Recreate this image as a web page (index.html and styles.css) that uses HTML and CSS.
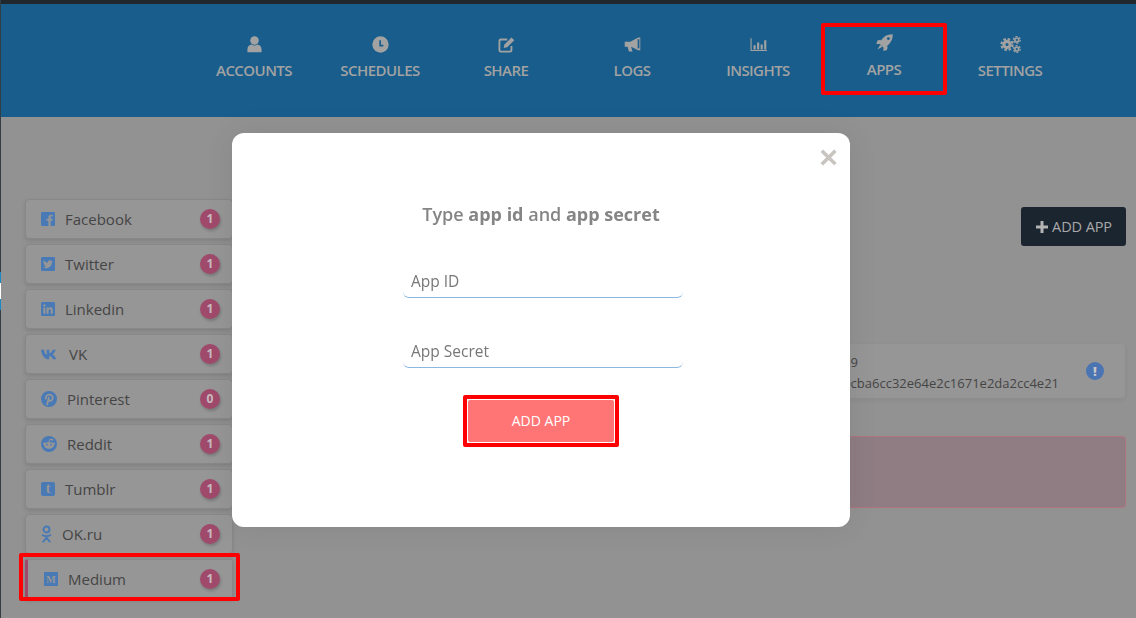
FILE: index.html
```html
<!DOCTYPE html>
<html lang="en">
<head>
  <meta charset="UTF-8" />
  <title>Apps</title>
  <link rel="stylesheet" href="styles.css">
</head>
<body>
  <div class="rail"><div class="rail-mark"><div class="rail-white"></div></div></div>
  <div class="topline"></div>

  <header class="header">
    <nav class="nav">
      <a class="nav-item">
        <svg class="nav-icon" viewBox="0 0 24 24"><circle cx="12" cy="6.500" r="6"/><path d="M2 23v-4c0-4 2.500-7 6-7 1.200.9 2.500 1.400 4 1.400s2.800-.5 4-1.400c3.500 0 6 3 6 7v4z"/></svg>
        <span>ACCOUNTS</span>
      </a>
      <a class="nav-item">
        <svg class="nav-icon" viewBox="0 0 24 24"><circle cx="12" cy="12" r="11.500"/><path class="cut" d="M11.500 6v7.500h4.500"/></svg>
        <span>SCHEDULES</span>
      </a>
      <a class="nav-item">
        <svg class="nav-icon" viewBox="0 0 24 24"><path class="line" d="M13 5H4a2 2 0 0 0-2 2v13a2 2 0 0 0 2 2h13a2 2 0 0 0 2-2v-6"/><path d="M9 12 19 2l4 4-10 10-5 1z"/></svg>
        <span>SHARE</span>
      </a>
      <a class="nav-item">
        <svg class="nav-icon" viewBox="0 0 24 24"><path d="M1 8h8l11-6h3v18h-3L10 15l2 7H7l-2-7H1z"/><path class="cut" d="M20.500 4.500v13"/></svg>
        <span>LOGS</span>
      </a>
      <a class="nav-item">
        <svg class="nav-icon" viewBox="0 0 24 24"><path class="thin" d="M1.500 3v17.500H24"/><path d="M5 13h3v6H5zM10 9h3v10h-3zM15 12h3v7h-3zM20 6h3v13h-3z"/></svg>
        <span>INSIGHTS</span>
      </a>
      <a class="nav-item nav-marked">
        <svg class="nav-icon" viewBox="0 0 24 24"><path d="M23.500.5C24 7 21 13 15 17.500l1.500.5-1 4.500-5 1.500v-5l-5-5h-5L2 9l4.500-1 .5 1.500C11 3 17 0 23.500.5z"/><path d="M6 15l-4 7 7-4z"/><circle class="hole" cx="17.500" cy="6.500" r="2"/></svg>
        <span>APPS</span>
      </a>
      <a class="nav-item">
        <svg class="nav-icon nav-icon-wide" viewBox="0 0 30 24">
          <circle class="gear-teeth" cx="10" cy="12" r="8"/><circle class="gear-ring" cx="10" cy="12" r="4.500"/>
          <circle class="gear-teeth small" cx="24" cy="5.500" r="5"/><circle class="gear-ring small" cx="24" cy="5.500" r="2.800"/>
          <circle class="gear-teeth small" cx="24" cy="18.500" r="5"/><circle class="gear-ring small" cx="24" cy="18.500" r="2.800"/>
        </svg>
        <span>SETTINGS</span>
      </a>
    </nav>
  </header>

  <div class="page">
    <aside class="sidebar">
      <a class="side-item">
        <svg class="side-icon" viewBox="0 0 24 24"><rect width="24" height="24" rx="2"/><path class="knock" d="M16.500 24v-9h3l.5-3.500h-3.500V9.500c0-1 .4-1.700 1.800-1.700H20V4.700c-.4 0-1.500-.2-2.800-.2-2.700 0-4.500 1.600-4.500 4.600v2.400H9.500V15h3.200v9z"/></svg>
        <span class="side-name">Facebook</span><b class="badge">1</b>
      </a>
      <a class="side-item">
        <svg class="side-icon" viewBox="0 0 24 24"><rect width="24" height="24" rx="2"/><path class="knock" transform="translate(3.500 4) scale(.7)" d="M23.953 4.570a10 10 0 01-2.825.775 4.958 4.958 0 002.163-2.723c-.951.555-2.005.959-3.127 1.184a4.920 4.920 0 00-8.384 4.482C7.690 8.095 4.067 6.130 1.640 3.162a4.822 4.822 0 00-.666 2.475c0 1.710.870 3.213 2.188 4.096a4.904 4.904 0 01-2.228-.616v.060a4.923 4.923 0 003.946 4.827 4.996 4.996 0 01-2.212.085 4.936 4.936 0 004.604 3.417 9.867 9.867 0 01-6.102 2.105c-.390 0-.779-.023-1.170-.067a13.995 13.995 0 007.557 2.209c9.053 0 13.998-7.496 13.998-13.985 0-.210 0-.420-.015-.630A9.935 9.935 0 0024 4.590z"/></svg>
        <span class="side-name">Twitter</span><b class="badge">1</b>
      </a>
      <a class="side-item">
        <svg class="side-icon" viewBox="0 0 24 24"><rect width="24" height="24" rx="2"/><path class="knock" d="M4 9.500h3.500V20H4zM5.750 4a2 2 0 1 1 0 4 2 2 0 0 1 0-4zM9.500 9.500h3.300V11c.6-1 1.800-1.800 3.500-1.800 3 0 4 2 4 5V20h-3.500v-5.200c0-1.500-.4-2.500-1.800-2.500s-2 1-2 2.500V20H9.500z"/></svg>
        <span class="side-name">Linkedin</span><b class="badge">1</b>
      </a>
      <a class="side-item">
        <svg class="side-icon side-icon-vk" viewBox="0 0 30 18"><path d="M0 1h5c.4 3.500 2.500 8 4.500 9V1H14v6c2 0 4.500-3 5.500-6h5c-.8 3.500-3.500 6-5 7.500 1.500 1 4.500 3.800 6 8.500h-5.500c-1-2.800-3.500-5.500-6.500-6v6h-1C6 17 .8 10 0 1z"/></svg>
        <span class="side-name">VK</span><b class="badge">1</b>
      </a>
      <a class="side-item">
        <svg class="side-icon side-icon-round" viewBox="0 0 24 24"><circle cx="12" cy="12" r="12"/><path class="knock-line" d="M7.500 12.500C6 8.500 9 5.500 12.500 5.500s5.500 2.500 5 5.500-3 4.500-5 3.500-1-1.500-.8-2.500M12 9l-3 12"/></svg>
        <span class="side-name">Pinterest</span><b class="badge">0</b>
      </a>
      <a class="side-item">
        <svg class="side-icon side-icon-round" viewBox="0 0 24 24"><circle cx="12" cy="12" r="12"/><ellipse class="knock" cx="12" cy="14" rx="7.500" ry="5"/><circle class="knock" cx="4.800" cy="11.500" r="1.800"/><circle class="knock" cx="19.200" cy="11.500" r="1.800"/><circle class="knock" cx="17" cy="5.500" r="1.500"/><path class="knock-line thin-line" d="M12 9l1-4 4 .5"/><circle cx="9.200" cy="13" r="1.300"/><circle cx="14.800" cy="13" r="1.300"/></svg>
        <span class="side-name">Reddit</span><b class="badge">1</b>
      </a>
      <a class="side-item">
        <span class="side-square">t</span>
        <span class="side-name">Tumblr</span><b class="badge">1</b>
      </a>
      <a class="side-item">
        <svg class="side-icon side-icon-ok" viewBox="0 0 14 24"><g class="ok-line"><circle cx="7" cy="6" r="4"/><path d="M1 13c3.500 2.500 8.500 2.500 12 0M7 15v2M2 23l5-6 5 6"/></g></svg>
        <span class="side-name">OK.ru</span><b class="badge">1</b>
      </a>
      <a class="side-item side-item-active">
        <span class="side-square side-square-m">M</span>
        <span class="side-name">Medium</span><b class="badge">1</b>
      </a>
    </aside>

    <main class="main">
      <div class="toolbar">
        <button class="add-btn"><svg class="plus" viewBox="0 0 12 12"><path d="M4.500 0h3v4.500H12v3H7.500V12h-3V7.500H0v-3h4.500z"/></svg>ADD APP</button>
      </div>
      <div class="app-card">
        <div class="app-text">
          <div>App ID : 4871659</div>
          <div>App Secret: 9dbcba6cc32e64e2c1671e2da2cc4e21</div>
        </div>
        <span class="info-dot">!</span>
      </div>
      <div class="alert"></div>
    </main>
  </div>

  <div class="backdrop">
    <div class="modal">
      <button class="close-btn">×</button>
      <h3 class="modal-title">Type <b>app id</b> and <b>app secret</b></h3>
      <form class="modal-form">
        <input class="modal-input" type="text" placeholder="App ID">
        <input class="modal-input" type="text" placeholder="App Secret">
        <div class="submit-mark">
          <button class="submit-btn" type="button">ADD APP</button>
        </div>
      </form>
    </div>
  </div>
</body>
</html>
```

FILE: styles.css
```css
* {
  box-sizing: border-box;
}
html, body {
  height: 100%;
}
body {
  margin: 0;
  overflow: hidden;
  font-family: "Open Sans", Arial, sans-serif;
  background: #929292;
  color: #454545;
}

/* Thin edge of the window behind the page */
.rail {
  position: fixed;
  top: 0;
  left: 0;
  bottom: 0;
  z-index: 20;
  width: 1px;
  padding-top: 272px;
  background: #323d45;
}
.rail-mark {
  height: 38px;
  padding: 11px 0;
  background: #1a8ac8;
}
.rail-white {
  height: 16px;
  background: #fff;
}

.topline {
  height: 4px;
  background: #20272d;
}

/* Header */
.header {
  height: 113px;
  background: #185d8c;
}
.nav {
  display: flex;
  padding: 19px 0 0 191px;
}
.nav-item {
  display: flex;
  flex-direction: column;
  align-items: center;
  width: 126px;
  height: 72px;
  padding-top: 13px;
  color: #a2a2a2;
  font-size: 15px;
  font-weight: 600;
  letter-spacing: -0.55px;
  line-height: 20px;
}
.nav-item span {
  margin-top: 7px;
}
.nav-icon {
  width: 17px;
  height: 17px;
  fill: #a2a2a2;
}
.nav-icon-wide {
  width: 21px;
}
.nav-icon .cut {
  fill: none;
  stroke: #185d8c;
  stroke-width: 2.4;
}
.nav-icon .line {
  fill: none;
  stroke: #a2a2a2;
  stroke-width: 2.6;
}
.nav-icon .thin {
  fill: none;
  stroke: #a2a2a2;
  stroke-width: 1.6;
}
.nav-icon .hole {
  fill: #185d8c;
}
.gear-teeth {
  fill: none;
  stroke: #a2a2a2;
  stroke-width: 3;
  stroke-dasharray: 3.600 2.680;
}
.gear-teeth.small {
  stroke-width: 1.500;
  stroke-dasharray: 3 2.240;
}
.gear-ring {
  fill: none;
  stroke: #a2a2a2;
  stroke-width: 4.500;
}
.gear-ring.small {
  stroke-width: 2.400;
}
.nav-marked {
  padding-top: 7px;
  border: 4px solid #fe0000;
  border-radius: 2px;
}
.nav-marked span {
  margin-top: 8px;
}

/* Page body */
.page {
  display: flex;
}
.sidebar {
  flex: none;
  width: 233px;
  padding: 82px 0 0 25px;
}
.side-item {
  position: relative;
  display: flex;
  align-items: center;
  gap: 10px;
  height: 40px;
  margin-bottom: 5px;
  padding: 0 12px 0 15px;
  background: #969696;
  border: 1px solid #888;
  border-radius: 4px;
  box-shadow: 0 2px 4px rgba(0, 0, 0, 0.12);
  font-size: 15px;
}
.side-item-active {
  padding-left: 16px;
  border-left: 3px solid #a04a6b;
  border-radius: 2px;
}
.side-item-active::after {
  content: "";
  position: absolute;
  top: -7px;
  left: -9px;
  right: -8px;
  bottom: -3px;
  border: 4px solid #fe0000;
  border-radius: 2px;
}
.side-name {
  flex: 1;
}
.side-icon {
  flex: none;
  width: 14px;
  height: 14px;
  fill: #4a7ab5;
}
.side-icon .knock {
  fill: #969696;
}
.side-icon .knock-line {
  fill: none;
  stroke: #969696;
  stroke-width: 2.600;
}
.side-icon .thin-line {
  stroke-width: 1.400;
}
.side-icon-vk {
  width: 18px;
  height: 11px;
}
.side-icon-round {
  width: 16px;
  height: 16px;
}
.side-icon-ok {
  width: 11px;
  height: 18px;
}
.ok-line {
  fill: none;
  stroke: #4a7ab5;
  stroke-width: 2.600;
}
.side-square {
  flex: none;
  display: flex;
  align-items: center;
  justify-content: center;
  width: 14px;
  height: 14px;
  border-radius: 2px;
  background: #4a7ab5;
  color: #969696;
  font-family: "Liberation Serif", serif;
  font-size: 14px;
  font-weight: bold;
}
.side-square-m {
  border-radius: 0;
  font-size: 10px;
}
.badge {
  flex: none;
  width: 20px;
  height: 20px;
  border-radius: 50%;
  background: #a04a6b;
  box-shadow: 1px 2px 3px rgba(0, 0, 0, 0.2);
  color: #c6bcc0;
  font-size: 12px;
  line-height: 20px;
  text-align: center;
}

.main {
  flex: 1;
  min-width: 0;
  padding: 90px 10px 0 30px;
}
.toolbar {
  display: flex;
  justify-content: flex-end;
}
.add-btn {
  display: flex;
  align-items: center;
  gap: 4px;
  height: 39px;
  padding: 0 14px 0 15px;
  background: #1b2530;
  border: none;
  border-radius: 3px;
  color: #a8a8a8;
  font-family: inherit;
  font-size: 14.500px;
  letter-spacing: -0.1px;
}
.plus {
  width: 12px;
  height: 12px;
  fill: #b4b4b4;
}
.app-card {
  display: flex;
  align-items: center;
  height: 54px;
  margin: 98px 1px 0 0;
  padding: 0 21px;
  background: #969696;
  border-radius: 4px;
  box-shadow: 0 2px 5px rgba(0, 0, 0, 0.06);
  font-size: 13px;
  line-height: 21px;
  white-space: nowrap;
}
.app-text {
  margin-left: auto;
  padding-top: 3px;
}
.info-dot {
  flex: none;
  width: 18px;
  height: 18px;
  margin-left: 27px;
  border-radius: 50%;
  background: #4a74b2;
  color: #c6c6c6;
  font-size: 13px;
  font-weight: 800;
  line-height: 18px;
  text-align: center;
}
.alert {
  height: 72px;
  margin-top: 38px;
  background: #8f7d83;
  border: 1px solid #ad747e;
  border-radius: 4px;
}

/* Modal */
.backdrop {
  position: fixed;
  top: 0;
  left: 0;
  right: 0;
  bottom: 0;
  z-index: 10;
  padding: 133px 0 0 232px;
}
.modal {
  position: relative;
  width: 618px;
  height: 394px;
  padding-top: 68px;
  background: #fff;
  border-radius: 12px;
  box-shadow: 0 0 30px rgba(0, 0, 0, 0.08);
  color: #858585;
}
.close-btn {
  position: absolute;
  top: 6px;
  right: 12px;
  padding: 0;
  background: none;
  border: none;
  color: #c8c4c0;
  font-family: "Liberation Sans", Arial, sans-serif;
  font-size: 32px;
  font-weight: bold;
  line-height: 36px;
}
.modal-title {
  margin: 0;
  font-size: 18px;
  font-weight: 600;
  line-height: 26px;
  text-align: center;
}
.modal-title b {
  font-weight: 700;
}
.modal-form {
  display: flex;
  flex-direction: column;
  align-items: center;
  margin-top: 36px;
}
.modal-input {
  width: 280px;
  height: 35px;
  margin: 0 0 35px 4px;
  padding: 1px 8px 0;
  border: none;
  border-bottom: 1px solid #8cb8e0;
  border-radius: 0 0 6px 6px;
  color: #777;
  font-family: inherit;
  font-size: 15.500px;
  outline: none;
}
.modal-input::placeholder {
  color: #777;
  opacity: 1;
}
.submit-mark {
  margin-top: -8px;
  border: 4px solid #fe0000;
  border-radius: 2px;
}
.submit-btn {
  display: block;
  width: 148px;
  height: 44px;
  padding: 0 0 2px;
  background: #ff7575;
  border: 1px solid #fff;
  border-radius: 3px;
  color: #fff;
  font-family: inherit;
  font-size: 14px;
}
```
